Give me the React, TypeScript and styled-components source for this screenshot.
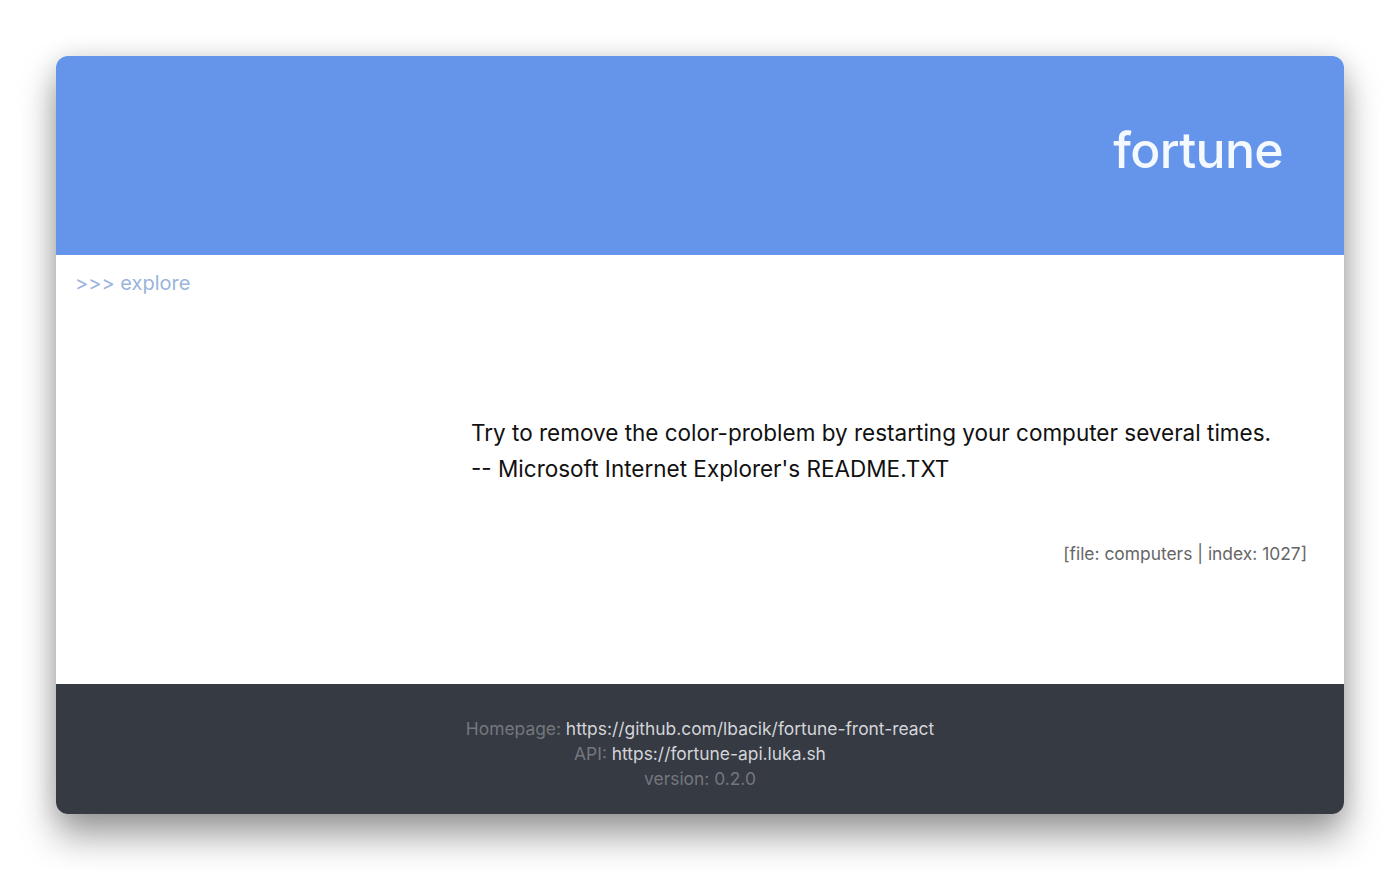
import React from "react";
import styled, { createGlobalStyle } from "styled-components";

const Global = createGlobalStyle`
  html, body { margin: 0; padding: 0; background: #ffffff; }
  body { font-family: Inter, "Noto Sans", "Liberation Sans", sans-serif; }
`;

const Page = styled.div`
  padding: 56px 56px 0 56px;
  height: 870px;
  box-sizing: border-box;
`;

const Window = styled.div`
  width: 1288px;
  height: 758px;
  border-radius: 12px;
  overflow: hidden;
  display: flex;
  flex-direction: column;
  box-shadow: 0 22px 36px rgba(0, 0, 0, 0.38), 0 0 24px rgba(0, 0, 0, 0.12);
  background: #ffffff;
`;

const Header = styled.header`
  height: 199px;
  background: #6594eb;
  display: flex;
  justify-content: flex-end;
  align-items: flex-start;
  padding: 69px 61px 0 0;
  box-sizing: border-box;
`;

const Title = styled.h1`
  margin: 0;
  font-size: 50px;
  font-weight: 500;
  color: #f4f8ff;
  letter-spacing: -0.7px;
  line-height: 1;
`;

const Main = styled.main`
  flex: 1;
  display: flex;
  flex-direction: column;
  padding: 16px 37px 0 19px;
  box-sizing: border-box;
`;

const ExploreLink = styled.a`
  font-size: 20px;
  color: #9ab4dc;
  text-decoration: none;
  line-height: 24px;
  align-self: flex-start;
`;

const Quote = styled.blockquote`
  margin: 120px 0 0 396px;
  font-size: 22.5px;
  line-height: 36px;
  color: #111111;
`;

const Source = styled.div`
  margin-top: 56px;
  text-align: right;
  font-size: 17.4px;
  color: #666666;
`;

const Footer = styled.footer`
  height: 130px;
  background: #363a43;
  display: flex;
  flex-direction: column;
  align-items: center;
  padding-top: 32px;
  box-sizing: border-box;
  font-size: 17.4px;
  line-height: 25px;
`;

const FooterLine = styled.div`
  color: #74777d;
`;

const FooterLink = styled.a`
  color: #d3d5d9;
  text-decoration: none;
`;

export default function App() {
  return (
    <>
      <Global />
      <Page>
        <Window>
          <Header>
            <Title>fortune</Title>
          </Header>
          <Main>
            <ExploreLink href="#">&gt;&gt;&gt; explore</ExploreLink>
            <Quote>
              Try to remove the color-problem by restarting your computer several times.
              <br />
              -- Microsoft Internet Explorer's README.TXT
            </Quote>
            <Source>[file: computers | index: 1027]</Source>
          </Main>
          <Footer>
            <FooterLine>
              Homepage: <FooterLink href="#">https://github.com/lbacik/fortune-front-react</FooterLink>
            </FooterLine>
            <FooterLine>
              API: <FooterLink href="#">https://fortune-api.luka.sh</FooterLink>
            </FooterLine>
            <FooterLine>version: 0.2.0</FooterLine>
          </Footer>
        </Window>
      </Page>
    </>
  );
}
